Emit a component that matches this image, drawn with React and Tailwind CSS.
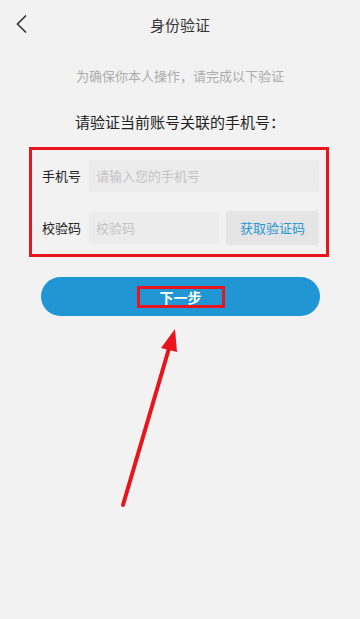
import React from "react";

export default function App() {
  return (
    <div
      className="relative w-full h-[619px] bg-[#f2f2f2] overflow-hidden"
      style={{ fontFamily: "'Noto Sans CJK SC', 'Noto Sans', sans-serif" }}
    >
      {/* Header */}
      <div className="relative h-[50px] flex items-center justify-center">
        <svg
          className="absolute left-[15px] top-[14px]"
          width="14"
          height="20"
          viewBox="0 0 14 20"
          fill="none"
        >
          <path d="M11 1.5 L2.5 10 L11 18.5" stroke="#333" strokeWidth="1.6" />
        </svg>
        <span className="text-[15px] text-[#333]">身份验证</span>
      </div>

      <p className="mt-[17px] text-center text-[13px] leading-[18px] text-[#adadad]">
        为确保你本人操作，请完成以下验证
      </p>

      <p className="mt-[26px] text-center text-[15px] leading-[22px] text-[#222]">
        请验证当前账号关联的手机号：
      </p>

      {/* Form */}
      <div className="mt-[14px] ml-[29px] w-[300px] border-[3px] border-[#e8141e] pl-[10px] pr-[7px] pt-[10px] pb-[9px]">
        <div className="flex items-center h-[32px]">
          <span className="w-[47px] shrink-0 text-[13px] text-[#222]">手机号</span>
          <div className="flex-1 h-[32px] rounded-[3px] bg-[#ececec] flex items-center pl-[7px] text-[13px] text-[#c4c4c4]">
            请输入您的手机号
          </div>
        </div>
        <div className="flex items-center h-[34px] mt-[19px]">
          <span className="w-[47px] shrink-0 text-[13px] text-[#222]">校验码</span>
          <div className="w-[130px] h-[32px] rounded-[3px] bg-[#ececec] flex items-center pl-[7px] text-[13px] text-[#c4c4c4]">
            校验码
          </div>
          <div className="ml-[7px] flex-1 h-[34px] rounded-[3px] bg-[#e5e5e5] flex items-center justify-center text-[13px] text-[#2a97d4]">
            获取验证码
          </div>
        </div>
      </div>

      {/* Next button */}
      <div className="mt-[20px] ml-[41px] w-[279px] h-[39px] rounded-full bg-[#2196d4] flex items-center justify-center">
        <div className="w-[88px] h-[22px] border-[3px] border-[#e8141e] flex items-center justify-center">
          <span className="text-[14px] font-bold text-white leading-none">下一步</span>
        </div>
      </div>

      {/* Annotation arrow */}
      <svg
        className="absolute left-0 top-0 pointer-events-none"
        width="360"
        height="619"
        viewBox="0 0 360 619"
      >
        <line x1="123" y1="505" x2="170" y2="345" stroke="#e8141e" strokeWidth="4" strokeLinecap="round" />
        <polygon points="175,329 161,348 177,352" fill="#e8141e" />
      </svg>
    </div>
  );
}
